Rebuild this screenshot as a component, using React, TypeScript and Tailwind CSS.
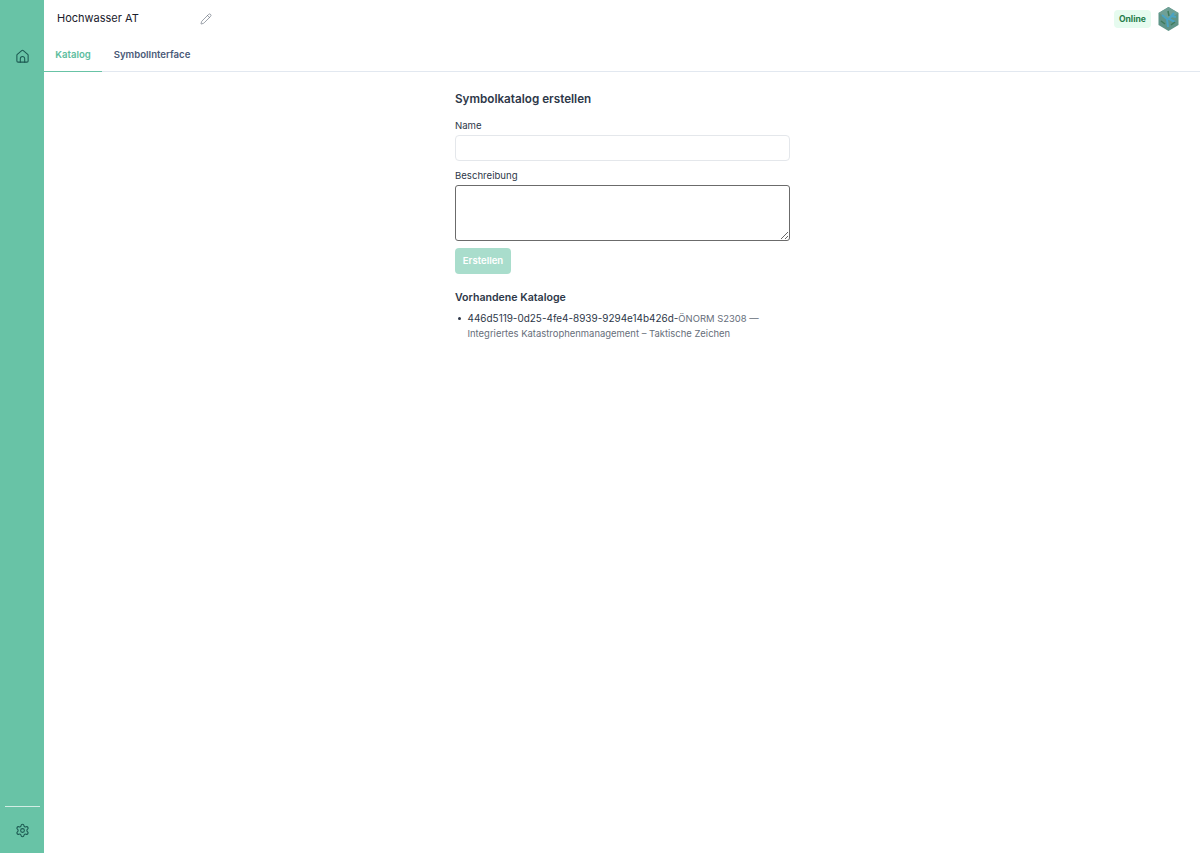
import { Pencil, Settings } from "lucide-react";

function HomeIcon() {
  return (
    <svg width="15" height="15" viewBox="0 0 24 24" fill="none" stroke="currentColor" strokeWidth="1.7" strokeLinecap="round" strokeLinejoin="round">
      <path d="M3 10a2 2 0 0 1 .709-1.528l7-6a2 2 0 0 1 2.582 0l7 6A2 2 0 0 1 21 10v9a2 2 0 0 1-2 2H5a2 2 0 0 1-2-2z" />
      <path d="M15.5 21v-5.5a3.5 3.5 0 0 0-7 0V21" />
    </svg>
  );
}

function Avatar() {
  return (
    <svg width="21" height="24" viewBox="0 0 21 24" className="shrink-0">
      <polygon points="10.5,0 20.5,6 20.5,18 10.5,24 0.5,18 0.5,6" fill="#5f9488" />
      <polygon points="10.5,0 20.5,6 10.5,12 0.5,6" fill="#6fa096" />
      <path d="M4 8l5 4 1 8M16 6l-5 6 6 3M13 9l5 1" stroke="#4aa3c4" strokeWidth="2" fill="none" />
      <path d="M10 4l1 5M3 14l4 3M13 18l4-3" stroke="#3f7a5c" strokeWidth="1.5" fill="none" />
    </svg>
  );
}

export default function App() {
  return (
    <div className="flex h-[853px] bg-white text-[#2d3748] font-['Inter',sans-serif] overflow-hidden">
      <aside className="flex w-11 shrink-0 flex-col items-center bg-[#68c3a6] pt-[49px] pb-[15px] text-[#1c5a52]">
        <HomeIcon />
        <div className="mt-auto mb-[16px] h-px w-[35px] bg-white/70" />
        <Settings size={15} strokeWidth={1.7} />
      </aside>

      <div className="flex min-w-0 flex-1 flex-col">
        <header className="flex h-[37px] items-center pl-[13px] pr-[21px]">
          <span className="w-[143px] text-[11px] text-[#1a202c]">Hochwasser AT</span>
          <Pencil size={12} strokeWidth={1.2} className="text-[#5a6472]" />
          <div className="ml-auto flex items-center gap-[7px]">
            <span className="rounded-[4px] bg-[#e6fbef] px-[5px] py-[3px] text-[8.6px] leading-[12px] font-bold text-[#1f7a48]">
              Online
            </span>
            <Avatar />
          </div>
        </header>

        <nav className="flex h-[35px] border-b border-[#e2e8f0] text-[9.6px] font-semibold">
          <a className="relative -mb-px flex h-[35px] w-[58px] items-center justify-center border-b border-[#68c3a6] pt-[3px] text-[#5dbd9e]">
            Katalog
          </a>
          <a className="flex w-[100px] items-center justify-center pt-[3px] text-[#4a5a78]">
            SymbolInterface
          </a>
        </nav>

        <main className="flex flex-1 justify-center pl-[1px]">
          <div className="w-[335px] pt-[20px]">
            <h2 className="text-[11.7px] leading-[15px] font-semibold">Symbolkatalog erstellen</h2>

            <label className="mt-[12px] block text-[9.6px] leading-[14px] text-[#2d3748]">Name</label>
            <input className="mt-[2px] block h-[26px] w-full rounded-[4px] border border-[#e4e7eb] bg-white" />

            <label className="mt-[8px] block text-[9.6px] leading-[14px] text-[#2d3748]">Beschreibung</label>
            <textarea className="mt-[2px] block h-[56px] w-full rounded-[3px] border border-[#6b6b6b] bg-white" />

            <button className="mt-[7px] block h-[26px] w-[56px] rounded-[4px] bg-[#a9ddcc] text-[9.6px] font-semibold text-white">
              Erstellen
            </button>

            <h3 className="mt-[16px] text-[10.6px] leading-[15px] font-semibold text-[#2d3748]">Vorhandene Kataloge</h3>

            <ul className="mt-[6px] text-[#2d3748]">
              <li className="flex">
                <span className="mt-[6px] ml-[3px] mr-[7px] h-[2.5px] w-[2.5px] shrink-0 rounded-full bg-[#2d3748]" />
                <p className="text-[9.45px] leading-[15px] text-[#666e7a]">
                  <span className="text-[9.95px] text-[#2d3748]">446d5119-0d25-4fe4-8939-9294e14b426d-</span>
                  ÖNORM S2308 — Integriertes Katastrophenmanagement – Taktische Zeichen
                </p>
              </li>
            </ul>
          </div>
        </main>
      </div>
    </div>
  );
}
